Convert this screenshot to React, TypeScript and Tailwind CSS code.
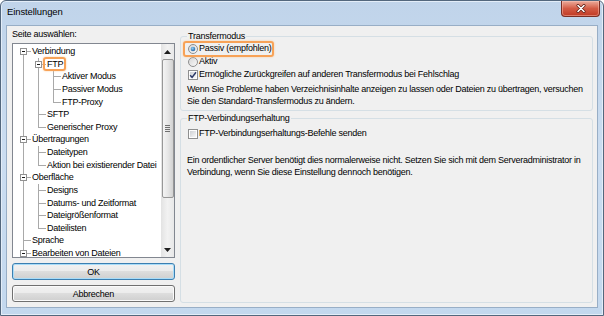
import React from "react";

type Cell = "I" | "T" | "L" | "R" | " ";

const treeRows: { label: string; cells: Cell[]; exp?: boolean; hl?: boolean }[] = [
  { label: "Verbindung", cells: ["R"], exp: true },
  { label: "FTP", cells: ["I", "T"], exp: true, hl: true },
  { label: "Aktiver Modus", cells: ["I", "I", "T"] },
  { label: "Passiver Modus", cells: ["I", "I", "T"] },
  { label: "FTP-Proxy", cells: ["I", "I", "L"] },
  { label: "SFTP", cells: ["I", "T"] },
  { label: "Generischer Proxy", cells: ["I", "L"] },
  { label: "Übertragungen", cells: ["T"], exp: true },
  { label: "Dateitypen", cells: ["I", "T"] },
  { label: "Aktion bei existierender Datei", cells: ["I", "L"] },
  { label: "Oberfläche", cells: ["T"], exp: true },
  { label: "Designs", cells: ["I", "T"] },
  { label: "Datums- und Zeitformat", cells: ["I", "T"] },
  { label: "Dateigrößenformat", cells: ["I", "T"] },
  { label: "Dateilisten", cells: ["I", "L"] },
  { label: "Sprache", cells: ["T"] },
  { label: "Bearbeiten von Dateien", cells: ["T"], exp: true },
];

const ROW_H = 12.625;
const LINE = "#a9a9a9";

function TreeCell({ type, expander }: { type: Cell; expander?: boolean }) {
  const cy = 6.5;
  return (
    <svg width="15" height={ROW_H} className="shrink-0" shapeRendering="crispEdges">
      {(type === "I" || type === "T") && <line x1="7.5" y1="0" x2="7.5" y2={ROW_H} stroke={LINE} />}
      {type === "L" && <line x1="7.5" y1="0" x2="7.5" y2={cy} stroke={LINE} />}
      {type === "R" && <line x1="7.5" y1={cy} x2="7.5" y2={ROW_H} stroke={LINE} />}
      {type !== "I" && type !== " " && <line x1="7.5" y1={cy} x2="15" y2={cy} stroke={LINE} />}
      {expander && (
        <>
          <rect x="4.5" y="3.5" width="6" height="6" fill="#fff" stroke="#919191" />
          <line x1="6" y1={cy} x2="9" y2={cy} stroke="#1a1a1a" />
        </>
      )}
    </svg>
  );
}

function Scrollbar() {
  return (
    <div className="flex w-[13px] shrink-0 flex-col bg-linear-to-r from-[#e3e3e3] via-[#f2f2f2] to-[#e8e8e8]">
      <div className="flex h-[15px] shrink-0 items-center justify-center">
        <svg width="7" height="4" viewBox="0 0 7 4">
          <path d="M0 4 L3.5 0 L7 4 Z" fill="#1e1e1e" />
        </svg>
      </div>
      <div className="mx-[0.5px] flex h-[139px] shrink-0 flex-col items-center justify-center gap-[1px] rounded-[2px] border border-[#979797] bg-linear-to-r from-[#f4f4f4] via-[#e6e6e6] to-[#d2d2d2]">
        <span className="h-[1px] w-[5px] bg-[#6f6f6f]" />
        <span className="h-[1px] w-[5px] bg-[#6f6f6f]" />
        <span className="h-[1px] w-[5px] bg-[#6f6f6f]" />
        <span className="h-[1px] w-[5px] bg-[#6f6f6f]" />
      </div>
      <div className="flex-1" />
      <div className="flex h-[15px] shrink-0 items-center justify-center">
        <svg width="7" height="4" viewBox="0 0 7 4">
          <path d="M0 0 L3.5 4 L7 0 Z" fill="#1e1e1e" />
        </svg>
      </div>
    </div>
  );
}

function Radio({ checked, id }: { checked?: boolean; id: string }) {
  return (
    <svg width="10" height="10" viewBox="0 0 10 10" className="shrink-0">
      <defs>
        <linearGradient id={`rb-${id}`} x1="0" y1="0" x2="1" y2="1">
          <stop offset="0" stopColor="#d4d4d4" />
          <stop offset="1" stopColor="#fbfbfb" />
        </linearGradient>
        <radialGradient id={`rd-${id}`} cx="0.4" cy="0.35" r="0.7">
          <stop offset="0" stopColor="#8fd0f7" />
          <stop offset="1" stopColor="#1f5e9e" />
        </radialGradient>
      </defs>
      <circle cx="5" cy="5" r="4.5" fill={`url(#rb-${id})`} stroke="#8e8f8f" />
      {checked && <circle cx="5" cy="5" r="2.3" fill={`url(#rd-${id})`} />}
    </svg>
  );
}

function Checkbox({ checked, id }: { checked?: boolean; id: string }) {
  return (
    <svg width="10" height="10" viewBox="0 0 10 10" className="shrink-0">
      <defs>
        <linearGradient id={`cb-${id}`} x1="0" y1="0" x2="1" y2="1">
          <stop offset="0" stopColor="#cdd0d4" />
          <stop offset="1" stopColor="#f7f7f7" />
        </linearGradient>
      </defs>
      <rect x="0.5" y="0.5" width="9" height="9" fill="#fdfdfd" stroke="#8e8f8f" shapeRendering="crispEdges" />
      <rect x="2" y="2" width="6" height="6" fill={`url(#cb-${id})`} />
      {checked && <path d="M2.2 5.2 L4.1 7.4 L8 2.3" fill="none" stroke="#2c3a68" strokeWidth="1.5" />}
    </svg>
  );
}

function Highlight({ className }: { className: string }) {
  return (
    <span
      className={`pointer-events-none absolute rounded-[3px] border-2 border-[#f7a257] shadow-[0_0_2px_#fbc995] ${className}`}
    />
  );
}

export default function App() {
  return (
    <div className="h-[316px] w-[604px] bg-white font-['Liberation_Sans',Arial,sans-serif] text-[9px] tracking-[-0.25px] text-black select-none">
      <div className="flex h-full flex-col rounded-t-[6px] border border-[#53677d] bg-linear-to-b from-[#c0d4ea] via-[#cbddf1] to-[#c3d8ee] shadow-[inset_0_0_0_1px_#e3edf8]">
        {/* Title bar */}
        <div className="flex h-[24px] shrink-0 justify-between pl-[6px] pr-[3px]">
          <span className="mt-[5px] text-[9.5px] leading-[12px] tracking-[-0.1px]">Einstellungen</span>
          <div className="flex h-[16px] w-[39px] items-center justify-center rounded-b-[4px] border border-t-0 border-[#7a2e24] bg-linear-to-b from-[#eaab9c] via-[#d35b45] to-[#c03923] shadow-[inset_0_0_0_1px_rgba(255,205,190,0.45)]">
            <svg width="10" height="9" viewBox="0 0 10 9">
              <path d="M2 1.5 L8 7.5 M8 1.5 L2 7.5" stroke="#5b1b12" strokeWidth="3" strokeLinecap="round" />
              <path d="M2 1.5 L8 7.5 M8 1.5 L2 7.5" stroke="#fff" strokeWidth="1.6" strokeLinecap="round" />
            </svg>
          </div>
        </div>

        {/* Client area */}
        <div className="flex min-h-0 flex-1 px-[5px] pb-[7px]">
          <div className="flex flex-1 gap-[5px] border border-[#98aec6] bg-[#f0f0f0] pl-[5px] pr-[4px]">
            {/* Left column */}
            <div className="flex w-[163px] shrink-0 flex-col pt-[2px]">
              <span className="leading-[12px]">Seite auswählen:</span>
              <div className="mt-[3px] flex h-[215px] shrink-0 border border-[#828790] bg-white">
                <div className="min-w-0 flex-1 overflow-hidden pl-[3px] pt-[1px]">
                  {treeRows.map((row) => (
                    <div key={row.label} className="flex h-[12.625px] items-center">
                      {row.cells.map((c, i) => (
                        <TreeCell key={i} type={c} expander={row.exp && i === row.cells.length - 1} />
                      ))}
                      <span className="relative ml-[1px] whitespace-nowrap leading-[12.625px]">
                        {row.label}
                        {row.hl && <Highlight className="-top-[0.5px] -bottom-[1px] -left-[4px] -right-[3px]" />}
                      </span>
                    </div>
                  ))}
                </div>
                <Scrollbar />
              </div>
              <button className="mt-[5px] flex h-[17px] shrink-0 items-center justify-center rounded-[3px] border border-[#3c7fb1] bg-[linear-gradient(#f2f2f2,#ebebeb_50%,#dddddd_50%,#cfcfcf)] leading-[12px] shadow-[inset_0_0_0_1px_#a9dcf8]">
                OK
              </button>
              <button className="mt-[5px] flex h-[17px] shrink-0 items-center justify-center rounded-[3px] border border-[#707070] bg-[linear-gradient(#f2f2f2,#ebebeb_50%,#dddddd_50%,#cfcfcf)] leading-[12px] shadow-[inset_0_0_0_1px_#fbfbfb]">
                Abbrechen
              </button>
            </div>

            {/* Right column */}
            <div className="flex min-w-0 flex-1 flex-col pt-[4px] pb-[4px]">
              <fieldset className="rounded-[3px] border border-[#d5dfe5] px-[6px] pb-[3px]">
                <legend className="px-[1px] leading-[12px]">Transfermodus</legend>
                <div className="relative flex h-[13px] w-fit items-center">
                  <Highlight className="-top-[1.5px] -bottom-[1.5px] -left-[4px] -right-[2px]" />
                  <span className="ml-[1px]">
                    <Radio checked id="passiv" />
                  </span>
                  <span className="ml-[1px] whitespace-nowrap">Passiv (empfohlen)</span>
                </div>
                <div className="flex h-[13px] items-center">
                  <span className="ml-[1px]">
                    <Radio id="aktiv" />
                  </span>
                  <span className="ml-[1px] whitespace-nowrap">Aktiv</span>
                </div>
                <div className="flex h-[13px] items-center">
                  <span className="ml-[1px]">
                    <Checkbox checked id="fallback" />
                  </span>
                  <span className="ml-[1px] whitespace-nowrap">
                    Ermögliche Zurückgreifen auf anderen Transfermodus bei Fehlschlag
                  </span>
                </div>
                <p className="mt-[1.5px] whitespace-nowrap leading-[12px]">
                  Wenn Sie Probleme haben Verzeichnisinhalte anzeigen zu lassen oder Dateien zu übertragen, versuchen
                  <br />
                  Sie den Standard-Transfermodus zu ändern.
                </p>
              </fieldset>

              <fieldset className="mt-[1.5px] min-h-0 flex-1 rounded-[3px] border border-[#d5dfe5] px-[6px]">
                <legend className="px-[1px] leading-[12px]">FTP-Verbindungserhaltung</legend>
                <div className="mt-[3.5px] flex h-[13px] items-center">
                  <span className="ml-[1px]">
                    <Checkbox id="keepalive" />
                  </span>
                  <span className="ml-[1px] whitespace-nowrap">FTP-Verbindungserhaltungs-Befehle senden</span>
                </div>
                <p className="mt-[13.5px] whitespace-nowrap leading-[12px]">
                  Ein ordentlicher Server benötigt dies normalerweise nicht. Setzen Sie sich mit dem Serveradministrator in
                  <br />
                  Verbindung, wenn Sie diese Einstellung dennoch benötigen.
                </p>
              </fieldset>
            </div>
          </div>
        </div>
      </div>
    </div>
  );
}
